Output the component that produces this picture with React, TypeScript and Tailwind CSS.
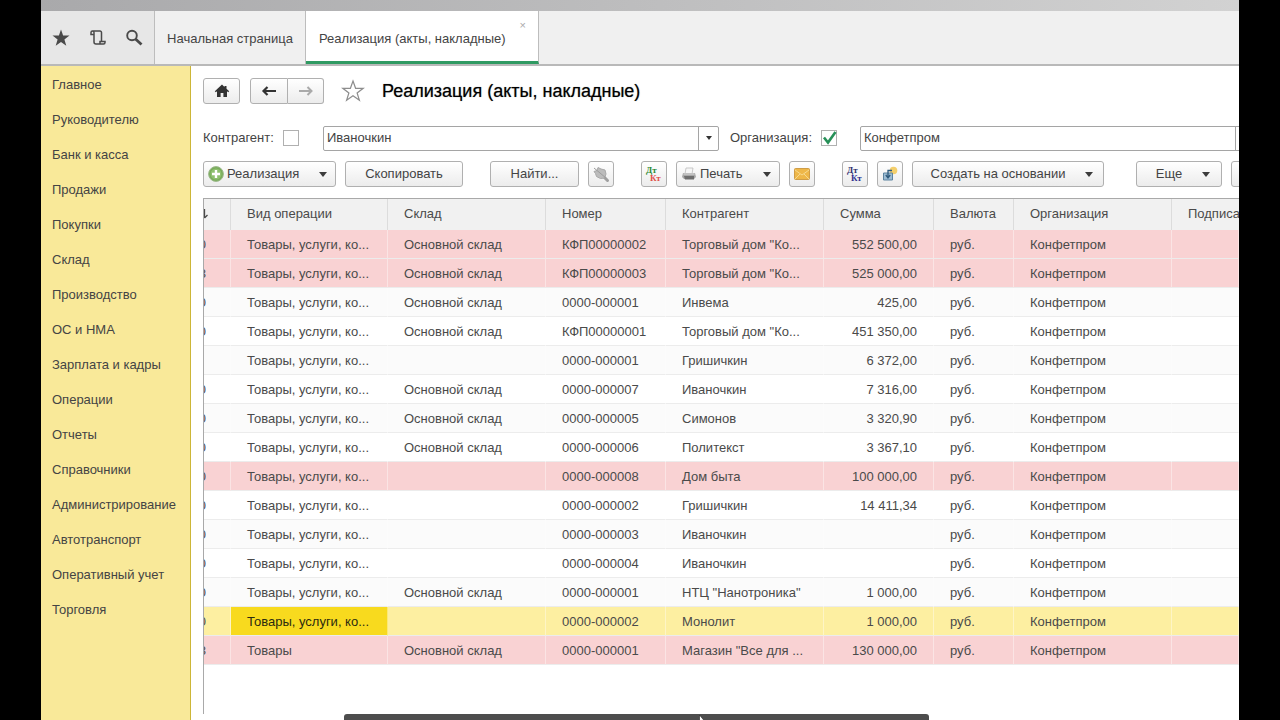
import React from 'react';

const sections = [
  'Главное', 'Руководителю', 'Банк и касса', 'Продажи', 'Покупки', 'Склад', 'Производство', 'ОС и НМА',
  'Зарплата и кадры', 'Операции', 'Отчеты', 'Справочники', 'Администрирование', 'Автотранспорт',
  'Оперативный учет', 'Торговля',
];

type Tone = 'pink' | 'plain' | 'current';
type Doc = { tail: string; kind: string; store: string; num: string; partner: string; sum: string; tone: Tone };

const goods = 'Товары, услуги, ко...';
const main = 'Основной склад';
const docs: Doc[] = [
  { tail: '0', kind: goods, store: main, num: 'КФП00000002', partner: 'Торговый дом "Ко...', sum: '552 500,00', tone: 'pink' },
  { tail: '8', kind: goods, store: main, num: 'КФП00000003', partner: 'Торговый дом "Ко...', sum: '525 000,00', tone: 'pink' },
  { tail: '0', kind: goods, store: main, num: '0000-000001', partner: 'Инвема', sum: '425,00', tone: 'plain' },
  { tail: '0', kind: goods, store: main, num: 'КФП00000001', partner: 'Торговый дом "Ко...', sum: '451 350,00', tone: 'plain' },
  { tail: '', kind: goods, store: '', num: '0000-000001', partner: 'Гришичкин', sum: '6 372,00', tone: 'plain' },
  { tail: '0', kind: goods, store: main, num: '0000-000007', partner: 'Иваночкин', sum: '7 316,00', tone: 'plain' },
  { tail: '0', kind: goods, store: main, num: '0000-000005', partner: 'Симонов', sum: '3 320,90', tone: 'plain' },
  { tail: '0', kind: goods, store: main, num: '0000-000006', partner: 'Политекст', sum: '3 367,10', tone: 'plain' },
  { tail: '0', kind: goods, store: '', num: '0000-000008', partner: 'Дом быта', sum: '100 000,00', tone: 'pink' },
  { tail: '0', kind: goods, store: '', num: '0000-000002', partner: 'Гришичкин', sum: '14 411,34', tone: 'plain' },
  { tail: '0', kind: goods, store: '', num: '0000-000003', partner: 'Иваночкин', sum: '', tone: 'plain' },
  { tail: '0', kind: goods, store: '', num: '0000-000004', partner: 'Иваночкин', sum: '', tone: 'plain' },
  { tail: '0', kind: goods, store: main, num: '0000-000001', partner: 'НТЦ "Нанотроника"', sum: '1 000,00', tone: 'plain' },
  { tail: '0', kind: goods, store: '', num: '0000-000002', partner: 'Монолит', sum: '1 000,00', tone: 'current' },
  { tail: '8', kind: 'Товары', store: main, num: '0000-000001', partner: 'Магазин "Все для ...', sum: '130 000,00', tone: 'pink' },
];

const tones: Record<Tone, string> = {
  pink: 'bg-[#f9d2d3]',
  plain: 'bg-white odd:bg-[#fbfbfb]',
  current: 'bg-[#fdefa1]',
};

const button =
  'flex h-[26px] shrink-0 items-center justify-center rounded-[3px] border border-[#b0b0b0] bg-linear-to-b from-white to-[#ececec] text-[#444]';

function Caret() {
  return (
    <svg viewBox="0 0 8 5" className="h-[5px] w-2 shrink-0" fill="#3c3c3c" aria-hidden="true">
      <path d="M0 0h8L4 5z" />
    </svg>
  );
}

function DebitCredit({ top, bottom }: { top: string; bottom: string }) {
  return (
    <svg viewBox="0 0 18 18" className="size-[18px]" aria-hidden="true" fontFamily="Liberation Serif, serif" fontWeight="bold" fontSize="9">
      <text x="1" y="8" fill={top}>Дт</text>
      <text x="5" y="16" fill={bottom}>Кт</text>
    </svg>
  );
}

function Toolbar() {
  return (
    <div className="mt-[10px] flex pl-3 whitespace-nowrap">
      <div className="flex gap-[9px]">
        <button className={`${button} w-[133px] gap-[3px] px-1`}>
          <svg viewBox="0 0 16 16" className="size-4 shrink-0" aria-hidden="true">
            <circle cx="8" cy="8" r="7.4" fill="#79ac5b" stroke="#9db98c" />
            <circle cx="8" cy="8" r="5.5" fill="#8fc070" />
            <path d="M8 4v8M4 8h8" stroke="#fff" strokeWidth="2.4" />
          </svg>
          <span className="flex-1 text-left">Реализация</span>
          <span className="pr-1"><Caret /></span>
        </button>
        <button className={`${button} w-[118px]`}>Скопировать</button>
      </div>
      <div className="ml-[27px] flex gap-[9px]">
        <button className={`${button} w-[89px]`}>Найти...</button>
        <button className={`${button} w-[26px]`} aria-label="Отменить поиск">
          <svg viewBox="0 0 18 18" className="size-[18px]" aria-hidden="true">
            <path d="M11 11l4.500 4.500" stroke="#a0a0a0" strokeWidth="3" strokeLinecap="round" />
            <path d="M2 6.500l3-1 1-3 3 1.500 4 1 1 4-1.500 4-4 .5-4-2-1-3z" fill="#bcbcbc" stroke="#a8a8a8" />
            <path d="M2 3l12 10" stroke="#9c9c9c" />
          </svg>
        </button>
      </div>
      <div className="ml-[27px] flex gap-[9px]">
        <button className={`${button} w-[26px]`} aria-label="Дт/Кт">
          <DebitCredit top="#2c8a34" bottom="#e0504a" />
        </button>
        <button className={`${button} w-[104px] gap-[3px] px-1`}>
          <svg viewBox="0 0 16 16" className="size-4 shrink-0" aria-hidden="true">
            <path d="M5 2h7l-1 6H4z" fill="#f6f6f6" stroke="#b5b5b5" strokeWidth=".7" />
            <path d="M2 7h12l1 4-2 2H3l-2-2z" fill="#a8a8a8" />
            <path d="M3 10h10v3.500H4z" fill="#6e6e6e" />
            <path d="M2.500 8h11" stroke="#ddd" />
          </svg>
          <span className="flex-1 text-left">Печать</span>
          <span className="pr-1"><Caret /></span>
        </button>
        <button className={`${button} w-[26px]`} aria-label="Отправить">
          <svg viewBox="0 0 16 12" className="h-3 w-4" aria-hidden="true">
            <rect x=".5" y=".5" width="15" height="11" rx="1" fill="#eeb748" stroke="#cf9d47" />
            <path d="M1 2l7 5 7-5M1 11l5-5M15 11l-5-5" fill="none" stroke="#f7d98f" />
          </svg>
        </button>
      </div>
      <div className="ml-[27px] flex gap-[9px]">
        <button className={`${button} w-[26px]`} aria-label="Проводки">
          <DebitCredit top="#31316f" bottom="#31318f" />
        </button>
        <button className={`${button} w-[26px]`} aria-label="Загрузить">
          <svg viewBox="0 0 16 16" className="size-4" aria-hidden="true">
            <circle cx="11.500" cy="4.500" r="3.800" fill="#f4cf6b" />
            <path d="M1.500 7h9v7h-9z" fill="#9dbcd3" stroke="#5c83a0" />
            <path d="M6 11V4.500h4M3.800 9L6 12l2.200-3" fill="none" stroke="#2f5a7c" strokeWidth="1.300" />
          </svg>
        </button>
        <button className={`${button} w-48 gap-5 pl-2`}>Создать на основании<Caret /></button>
      </div>
      <div className="ml-8 flex gap-[9px]">
        <button className={`${button} w-[86px] gap-5 pl-2`}>Еще<Caret /></button>
        <button className={`${button} w-[26px]`} aria-label="Справка" />
      </div>
    </div>
  );
}

const head = 'border-r border-[#dcdcdc] pt-0 pb-[2px] pl-4 text-left font-normal';
const cell = 'border-r border-b border-r-white/40 border-b-[#ececec] pt-[2px] pb-0 pl-4';

function Documents() {
  return (
    <div className="mt-[11px] ml-3 flex-1 border-t border-l border-[#a9a9a9]">
      <table className="w-full table-fixed border-separate border-spacing-0 whitespace-nowrap text-[#4a4a4a]">
        <colgroup>
          <col className="w-[27px]" />
          <col className="w-[157px]" />
          <col className="w-[158px]" />
          <col className="w-[120px]" />
          <col className="w-[158px]" />
          <col className="w-[110px]" />
          <col className="w-20" />
          <col className="w-[158px]" />
          <col />
        </colgroup>
        <thead>
          <tr className="h-[31px] bg-[#f1f1f1]">
            <th className="border-r border-[#dcdcdc] p-0 pb-[2px] font-normal" aria-label="Дата">
              <svg viewBox="0 0 4 10" className="h-[10px] w-1" fill="none" stroke="#4a4a4a" aria-hidden="true">
                <path d="M.5 0v9M.5 9L3.500 6" strokeWidth="1.300" />
              </svg>
            </th>
            <th className={head}>Вид операции</th>
            <th className={head}>Склад</th>
            <th className={head}>Номер</th>
            <th className={head}>Контрагент</th>
            <th className={head}>Сумма</th>
            <th className={head}>Валюта</th>
            <th className={head}>Организация</th>
            <th className="overflow-hidden pt-0 pb-[2px] pl-4 text-left font-normal">Подписан</th>
          </tr>
        </thead>
        <tbody>
          {docs.map((d, i) => (
            <tr key={i} className={`h-[29px] ${tones[d.tone]}`}>
              <td className="border-r border-b border-r-white/40 border-b-[#ececec] p-0 pt-[2px]">
                <div className="flex w-[2px] justify-end overflow-hidden">{d.tail}</div>
              </td>
              <td className={`${cell} ${d.tone === 'current' ? 'bg-[#f8da1e] text-[#2b2b10]' : ''}`}>{d.kind}</td>
              <td className={cell}>{d.store}</td>
              <td className={cell}>{d.num}</td>
              <td className={cell}>{d.partner}</td>
              <td className={`${cell} pr-4 text-right`}>{d.sum}</td>
              <td className={cell}>руб.</td>
              <td className={cell}>Конфетпром</td>
              <td className={cell}></td>
            </tr>
          ))}
        </tbody>
      </table>
    </div>
  );
}

export default function App() {
  return (
    <div className="h-screen overflow-hidden bg-black px-[41px] font-['Liberation_Sans',Arial,sans-serif] text-[13px] leading-4 text-[#444]">
      <div className="flex h-full flex-col overflow-hidden bg-white">
        <div className="h-[11px] shrink-0 bg-linear-to-r from-[#a9a9ab] to-[#d2d2d2]" />
        <header className="flex h-[55px] shrink-0 border-b-2 border-[#b9b9b9] bg-[#f0f0f0]">
          <div className="flex w-[114px] items-center justify-between border-r border-[#bdbdbd] bg-[#e7e7e7] px-[11px] text-[#4a4a4a]">
            <button aria-label="Избранное">
              <svg viewBox="0 0 18 18" className="size-[18px]" fill="currentColor" aria-hidden="true">
                <path d="M9 .5l2.100 6.100h6.400l-5.100 3.900 1.900 6.300L9 13l-5.300 3.800 1.900-6.300L.5 6.600h6.400z" />
              </svg>
            </button>
            <button aria-label="История">
              <svg viewBox="0 0 18 18" className="size-[18px]" fill="none" stroke="currentColor" strokeWidth="1.500" aria-hidden="true">
                <path d="M5 5.500H2V3.500A1.500 1.500 0 0 1 3.500 2H11a1.500 1.500 0 0 1 1.500 1.500v9M3.500 2A1.500 1.500 0 0 1 5 3.500V13a2 2 0 0 0 2 2h7.500a1.500 1.500 0 0 0 1.500-1.500v-1h-5V15" />
              </svg>
            </button>
            <button aria-label="Поиск">
              <svg viewBox="0 0 18 18" className="size-[18px]" fill="none" stroke="currentColor" aria-hidden="true">
                <circle cx="7" cy="6.500" r="4.800" strokeWidth="1.900" />
                <path d="M10.500 10l6 5.500" strokeWidth="2.800" />
              </svg>
            </button>
          </div>
          <a href="#home" className="flex w-[151px] items-center justify-center border-r border-[#bdbdbd] pt-[2px]">Начальная страница</a>
          <div className="relative flex w-[233px] items-center border-r border-b-3 border-r-[#bdbdbd] border-b-[#2f9a62] bg-white pt-[5px] pl-[13px]">
            <a href="#sales">Реализация (акты, накладные)</a>
            <button className="absolute top-2 right-3 text-[11px] leading-3 text-[#aaa]" aria-label="Закрыть">×</button>
          </div>
        </header>
        <div className="flex min-h-0 flex-1">
          <nav className="flex w-[150px] shrink-0 flex-col border-r border-[#cdb637] bg-[#f9e999] pt-px pl-[11px]">
            {sections.map((s) => (
              <a key={s} href="#section" className="flex h-[35px] shrink-0 items-center whitespace-nowrap">{s}</a>
            ))}
          </nav>
          <main className="relative flex min-w-0 flex-1 flex-col overflow-hidden pt-3">
            <div className="flex items-center pl-3">
              <button className={`${button} w-[37px]`} aria-label="Домой">
                <svg viewBox="0 0 16 14" className="h-[14px] w-4" fill="#333" aria-hidden="true">
                  <path d="M8 .5L.8 7.200l1 1L3 7.300V13h3.600V9h2.800v4H13V7.300l1.200.9 1-1L12.500 4.700V2h-2v1z" />
                </svg>
              </button>
              <div className="ml-[10px] flex">
                <button className={`${button} w-[38px] rounded-r-none`} aria-label="Назад">
                  <svg viewBox="0 0 16 12" className="h-3 w-4" fill="none" stroke="#333" strokeWidth="2.200" aria-hidden="true"><path d="M15 6H2M6.500 2L2.500 6l4 4" /></svg>
                </button>
                <button className={`${button} w-[36px] rounded-l-none border-l-0`} aria-label="Вперед">
                  <svg viewBox="0 0 16 12" className="h-3 w-4" fill="none" stroke="#aaa" strokeWidth="2" aria-hidden="true"><path d="M1 6h13M9.500 2l4 4-4 4" /></svg>
                </button>
              </div>
              <button className="ml-[17px]" aria-label="В избранное">
                <svg viewBox="0 0 24 24" className="size-6" fill="none" stroke="#8d8d8d" strokeWidth="1.200" aria-hidden="true">
                  <path d="M12 2l2.600 7.300h7.600l-6.100 4.600 2.300 7.400L12 16.800l-6.400 4.500 2.300-7.400L1.800 9.300h7.600z" />
                </svg>
              </button>
              <h1 className="ml-[17px] text-[18px] leading-6 text-black text-shadow-[0_0_1px_#00000080]">Реализация (акты, накладные)</h1>
            </div>
            <div className="mt-[21px] flex h-[26px] shrink-0 items-center pl-3">
              <label htmlFor="partner-on" className="w-20 shrink-0">Контрагент:</label>
              <input id="partner-on" type="checkbox" className="size-4 shrink-0 appearance-none border border-[#b0b0b0] bg-white" />
              <div className="ml-6 flex h-[25px] w-[396px] shrink-0 rounded-[2px] border border-[#a5a5a5]">
                <input aria-label="Контрагент" defaultValue="Иваночкин" className="min-w-0 flex-1 px-[3px]" />
                <button className="flex w-5 items-center justify-center border-l border-[#a5a5a5]" aria-label="Выбрать">
                  <svg viewBox="0 0 6 4" className="h-1 w-[6px]" fill="#333" aria-hidden="true"><path d="M0 0h6L3 4z" /></svg>
                </button>
              </div>
              <label htmlFor="org-on" className="ml-[11px] w-[91px] shrink-0">Организация:</label>
              <span className="relative flex shrink-0">
                <input id="org-on" type="checkbox" defaultChecked className="size-4 appearance-none border border-[#b0b0b0] bg-white" />
                <svg viewBox="0 0 16 16" className="pointer-events-none absolute inset-0 size-4" fill="none" stroke="#279058" strokeWidth="2.600" aria-hidden="true"><path d="M3 7.500l4 5L14.500 2" /></svg>
              </span>
              <div className="ml-[23px] flex h-[25px] w-[396px] shrink-0 rounded-[2px] border border-[#a5a5a5]">
                <input aria-label="Организация" defaultValue="Конфетпром" className="min-w-0 flex-1 px-[3px]" />
                <button className="w-5 border-l border-[#a5a5a5]" aria-label="Выбрать" />
              </div>
            </div>
            <Toolbar />
            <Documents />
            <div className="flex h-[6px] shrink-0 pl-[153px]">
              <div className="w-[585px] rounded-t-[3px] bg-[#4d4d4d]" />
            </div>
            <svg viewBox="0 0 6 5" className="absolute bottom-0 left-[508px] h-[5px] w-[6px]" fill="#fff" stroke="#222" strokeWidth=".6" aria-hidden="true">
              <path d="M.5 0v6h5z" />
            </svg>
          </main>
        </div>
      </div>
    </div>
  );
}
